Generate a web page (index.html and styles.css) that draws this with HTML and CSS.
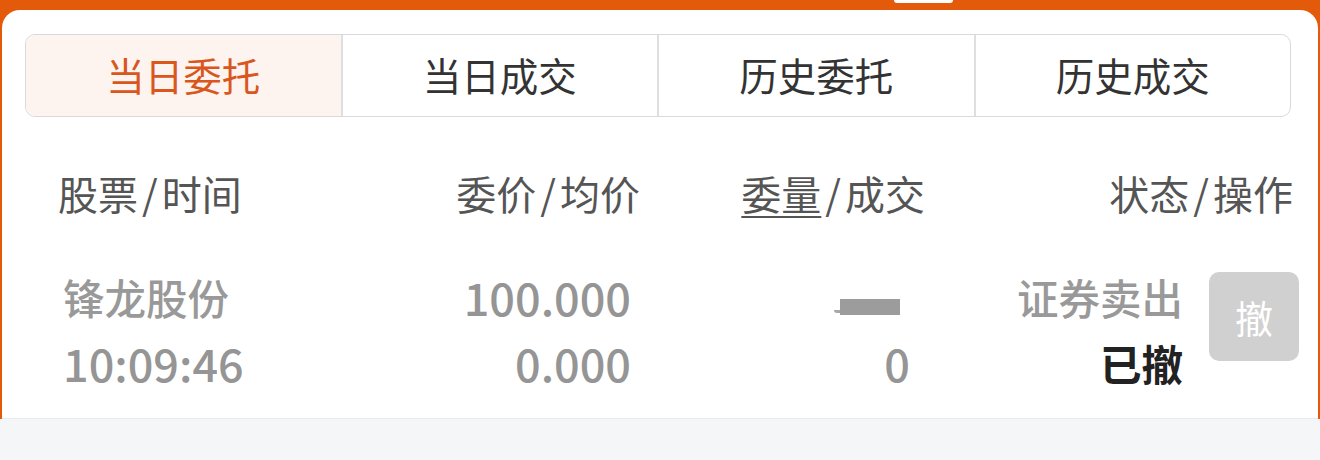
FILE: index.html
```html
<html>

    <head>
        <title>当日委托</title>
        <meta charset="utf-8">
        <link rel="stylesheet" href="styles.css">
    </head>

    <body>
        <div class="top">
            <span class="handle"></span>
            <div class="panel">
                <div class="tabs">
                    <div class="tab active">当日委托</div>
                    <div class="tab">当日成交</div>
                    <div class="tab">历史委托</div>
                    <div class="tab">历史成交</div>
                </div>

                <div class="row head">
                    <div class="c1">股票<span class="sep">/</span>时间</div>
                    <div class="c2">委价<span class="sep">/</span>均价</div>
                    <div class="c3"><u>委量</u><span class="sep">/</span>成交</div>
                    <div class="c4">状态<span class="sep">/</span>操作</div>
                </div>

                <div class="row data">
                    <div class="c1">
                        <div class="line">锋龙股份</div>
                        <div class="line num">10:09:46</div>
                    </div>
                    <div class="c2">
                        <div class="line num">100.000</div>
                        <div class="line num">0.000</div>
                    </div>
                    <div class="c3">
                        <div class="line masked"><span class="smear"></span><span class="mask"></span></div>
                        <div class="line num">0</div>
                    </div>
                    <div class="c4">
                        <div class="status">
                            <div class="line">证券卖出</div>
                            <div class="line done">已撤</div>
                        </div>
                        <button class="cancel">撤</button>
                    </div>
                </div>
            </div>
        </div>
        <div class="foot"></div>
    </body>

</html>
```

FILE: styles.css
```css
body {
    margin: 0;
    padding: 0;
    background-color: #f5f6f8;
    font-family: "Noto Sans CJK SC", sans-serif;
    color: #333;
}

.top {
    position: relative;
    background-color: #e35a0b;
    padding-top: 10px;
}

.top .handle {
    position: absolute;
    left: 894px;
    top: 0;
    width: 59px;
    height: 3px;
    background-color: white;
    border-radius: 0 0 4px 4px;
}

.panel {
    background-color: white;
    margin: 0 2px;
    padding: 24px 27px 22px 23px;
    border-radius: 18px 18px 0 0;
    border-bottom: 1px solid #e9eaec;
}

.tabs {
    display: flex;
    height: 81px;
    border: 1px solid #d9d9dc;
    border-radius: 10px;
    overflow: hidden;
}

.tab {
    flex: 1;
    display: flex;
    align-items: center;
    justify-content: center;
    padding-bottom: 3px;
    font-size: 38.5px;
    color: #333;
    border-left: 2px solid #dfdfe2;
}

.tab:first-child {
    border-left: 0;
}

.tab.active {
    background-color: #fdf4f0;
    color: #d9571c;
}

.row {
    display: grid;
    grid-template-columns: 282px 300px 285px 368px;
    padding-left: 33px;
}

.head {
    margin-top: 46px;
    line-height: 60px;
    font-size: 40px;
    color: #555;
}

.head .sep {
    margin: 0 4px;
}

.head u {
    text-decoration-thickness: 2px;
    text-underline-offset: 6px;
}

.c2, .c3, .c4 {
    text-align: right;
}

.data {
    margin-top: 41px;
    font-size: 41.5px;
    font-weight: 500;
    color: #999;
}

.data .line {
    height: 66px;
    line-height: 66px;
}

.data .c1 {
    padding-left: 5px;
}

.data .c2 {
    padding-right: 9px;
}

.data .c3 {
    padding-right: 15px;
}

.data .num {
    font-size: 45px;
    color: #959595;
}

.masked {
    display: flex;
    justify-content: flex-end;
    align-items: flex-start;
    padding-right: 10px;
}

.mask {
    width: 60px;
    height: 16px;
    margin-top: 35px;
    background-color: #9c9c9c;
}

.smear {
    width: 14px;
    height: 3px;
    margin-top: 46px;
    margin-right: -8px;
    border-radius: 0 0 8px 8px;
    background-color: #a8a8a8;
}

.data .c4 {
    display: flex;
    justify-content: flex-end;
    align-items: flex-start;
    gap: 26px;
    margin-right: -6px;
}

.status .done {
    color: #222;
    font-weight: 700;
}

.cancel {
    margin-top: 8px;
    width: 90px;
    height: 89px;
    border: 0;
    border-radius: 10px;
    background-color: #d0d0d0;
    color: white;
    font-family: "Noto Sans CJK SC", sans-serif;
    font-size: 38px;
}

.foot {
    height: 60px;
}
```
